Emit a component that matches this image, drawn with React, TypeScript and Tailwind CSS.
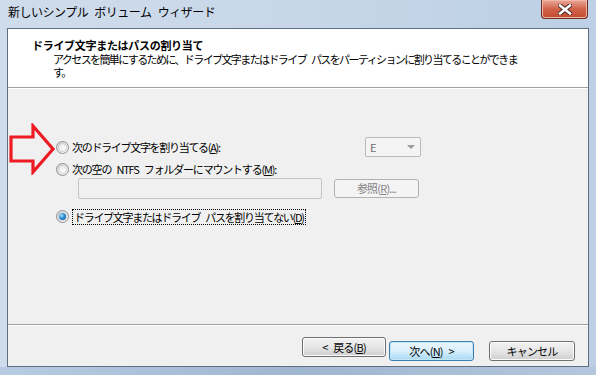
import { ReactNode } from 'react';

const jp = "font-['Noto_Sans_CJK_JP','Noto_Sans',sans-serif]";

function Radio({ checked }: { checked?: boolean }) {
  return (
    <span className="relative flex h-[13px] w-[13px] shrink-0 items-center justify-center rounded-full border border-[#8f9091] bg-gradient-to-br from-[#d4d4d4] to-[#fbfbfb]">
      <span className="h-[9px] w-[9px] rounded-full border border-[#cfcfcf] bg-gradient-to-br from-[#e9e9e9] to-[#ffffff]" />
      {checked && (
        <span className="absolute left-[2px] top-[2px] h-[7px] w-[7px] rounded-full bg-[radial-gradient(circle_at_35%_35%,#a9e0ff_0%,#2d8fd6_45%,#0b4d8e_100%)]" />
      )}
    </span>
  );
}

function Btn({ children, primary, w }: { children: ReactNode; primary?: boolean; w: string }) {
  return (
    <button
      className={
        primary
          ? `h-[20px] ${w} rounded-[3px] border border-[#3c7fb1] bg-gradient-to-b from-[#eaf6fd] via-[#d9f0fc] to-[#a7d9f5] text-[11px] tracking-[-0.8px] [word-spacing:4px] text-black shadow-[inset_0_0_0_1px_#c4e5f6]`
          : `h-[20px] ${w} rounded-[3px] border border-[#707070] bg-gradient-to-b from-[#f2f2f2] via-[#e6e6e6] to-[#cfcfcf] text-[11px] tracking-[-0.8px] [word-spacing:4px] text-black shadow-[inset_0_0_0_1px_#fbfbfb]`
      }
    >
      {children}
    </button>
  );
}

export default function App() {
  return (
    <div className={`flex h-[375px] w-[596px] flex-col overflow-hidden bg-gradient-to-r from-[#cfdceb] via-[#c7d7e9] to-[#bccfe4] [word-spacing:4px] ${jp}`}>
      {/* title bar */}
      <div className="flex h-[28px] shrink-0 items-start justify-between">
        <div className="pl-[8px] pt-[4px] text-[12px] leading-[16px] tracking-[-0.5px] text-black">
          新しいシンプル ボリューム ウィザード
        </div>
        <div className="mr-[8px] flex h-[19px] w-[47px] items-center justify-center rounded-b-[4px] border border-t-0 border-[#6e2d20] bg-gradient-to-b from-[#e9a998] via-[#d0624a] to-[#c24a2e] shadow-[inset_0_0_0_1px_#f1b6a6]">
          <svg width="14" height="11" viewBox="0 0 14 11">
            <path d="M2 1.5 L12 9.5 M12 1.5 L2 9.5" stroke="#4a2a25" strokeWidth="4.5" strokeLinecap="square" />
            <path d="M2 1.5 L12 9.5 M12 1.5 L2 9.5" stroke="#ffffff" strokeWidth="2.5" strokeLinecap="square" />
          </svg>
        </div>
      </div>

      {/* client */}
      <div className="mx-[7px] flex flex-1 flex-col border border-[#5f6f81] bg-[#f0f0f0]">
        {/* header */}
        <div className="h-[59px] shrink-0 border-b border-[#a0a0a0] bg-white pl-[24px] pt-[8px]">
          <div className="text-[11px] font-bold leading-[16px] tracking-[-0.3px] text-black">
            ドライブ文字またはパスの割り当て
          </div>
          <div className="pl-[21px] text-[11px] leading-[13px] tracking-[-1.6px] text-black">
            <div className="whitespace-nowrap">アクセスを簡単にするために、ドライブ文字またはドライブ パスをパーティションに割り当てることができま</div>
            <div>す。</div>
          </div>
        </div>

        {/* body */}
        <div className="relative flex-1 border-t border-white pl-[48px] pt-[48px]">
          <svg className="absolute left-[0px] top-[34px]" width="50" height="52" viewBox="0 0 50 52">
            <polygon
              points="3,14 25,14 25,3 45,26 25,49 25,38 3,38"
              fill="none"
              stroke="#ed1c24"
              strokeWidth="3.2"
              strokeLinejoin="miter"
            />
          </svg>

          <div className="flex h-[20px] w-[365px] items-center justify-between">
            <div className="flex items-center gap-[3px]">
              <Radio />
              <span className="text-[11px] tracking-[-1.3px] text-black">
                次のドライブ文字を割り当てる(<span className="underline">A</span>):
              </span>
            </div>
            <div className="flex h-[20px] w-[56px] items-center justify-between rounded-[2px] border border-[#b9b9b9] bg-[#f4f4f4] pl-[4px] pr-[5px] text-[11px] text-[#6d6d6d]">
              <span>E</span>
              <span className="border-x-[4px] border-t-[4px] border-x-transparent border-t-[#9a9a9a]" />
            </div>
          </div>

          <div className="mt-[5px] flex h-[14px] items-center gap-[3px]">
            <Radio />
            <span className="text-[11px] tracking-[-1.2px] text-black">
              次の空の NTFS フォルダーにマウントする(<span className="underline">M</span>):
            </span>
          </div>

          <div className="mt-[2px] flex items-center gap-[12px] pl-[22px]">
            <div className="h-[21px] w-[244px] rounded-[2px] border border-[#c4c4c4] bg-[#f0f0f0]" />
            <div className="flex h-[19px] w-[85px] items-center justify-center rounded-[3px] border border-[#adb2b5] bg-[#f4f4f4] text-[11px] tracking-[-0.8px] text-[#838383]">
              参照(<span className="underline">R</span>)...
            </div>
          </div>

          <div className="mt-[9px] flex h-[17px] items-center gap-[3px]">
            <Radio checked />
            <span className="border border-dotted border-black px-[1px] text-[11px] leading-[14px] tracking-[-1.3px] text-black">
              ドライブ文字またはドライブ パスを割り当てない(<span className="underline">D</span>)
            </span>
          </div>
        </div>

        {/* footer */}
        <div className="flex h-[42px] shrink-0 items-start justify-end border-t border-[#a0a0a0] pr-[13px] pt-[12px] shadow-[inset_0_1px_0_#ffffff]">
          <Btn w="w-[84px]">
            &lt; 戻る(<span className="underline">B</span>)
          </Btn>
          <div className="ml-[3px]">
            <Btn w="w-[85px]" primary>
              次へ(<span className="underline">N</span>) &gt;
            </Btn>
          </div>
          <div className="ml-[15px]">
            <Btn w="w-[86px]">キャンセル</Btn>
          </div>
        </div>
      </div>

      {/* bottom frame */}
      <div className="h-[8px] shrink-0 bg-gradient-to-r from-[#b7cce3] via-[#9fb6cf] to-[#b3c7dd]" />
    </div>
  );
}
